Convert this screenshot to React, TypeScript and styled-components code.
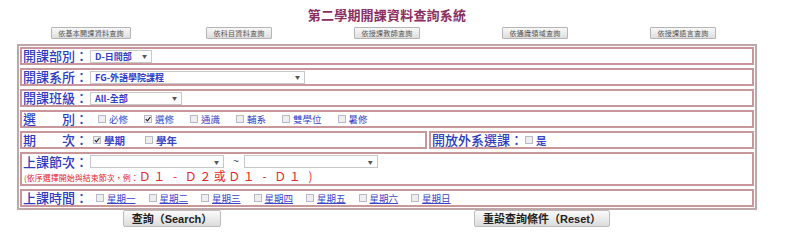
import styled, { createGlobalStyle } from "styled-components";

const GlobalStyle = createGlobalStyle`
  html, body {
    margin: 0;
    padding: 0;
    background: #ffffff;
  }
  body {
    font-family: "Noto Sans CJK TC", "Liberation Sans", sans-serif;
  }
`;

const Page = styled.div`
  width: 740px;
  padding: 6px 0 0 17px;
  box-sizing: content-box;
`;

const Title = styled.h1`
  margin: 0;
  text-align: center;
  font-size: 13px;
  line-height: 17px;
  font-weight: 700;
  color: #8b2f63;
  letter-spacing: 0.2px;
`;

const TopNav = styled.div`
  display: grid;
  grid-template-columns: repeat(5, 1fr);
  justify-items: center;
  margin-top: 4px;
  height: 12px;
`;

const NavButton = styled.button`
  height: 12px;
  padding: 0 6px;
  font-family: "Noto Sans CJK TC", sans-serif;
  font-size: 7px;
  line-height: 10px;
  color: #555555;
  background: linear-gradient(#f8f8f8, #dedede);
  border: 1px solid #b5b5b5;
  border-radius: 1px;
  letter-spacing: 0.3px;
`;

const Frame = styled.div`
  margin-top: 5px;
  border: 2px solid #bda7a8;
  padding: 1px;
  display: flex;
  flex-direction: column;
  gap: 3px;
`;

const Row = styled.div<{ $tall?: boolean }>`
  border: 2px solid #c9979b;
  height: ${(p) => (p.$tall ? 30 : 14)}px;
  display: flex;
  flex-direction: ${(p) => (p.$tall ? "column" : "row")};
  align-items: ${(p) => (p.$tall ? "flex-start" : "center")};
  justify-content: ${(p) => (p.$tall ? "center" : "flex-start")};
`;

const SplitRow = styled.div`
  display: grid;
  grid-template-columns: 407px 1fr;
  gap: 2px;
`;

const Cell = styled.div`
  border: 2px solid #c9979b;
  height: 14px;
  display: flex;
  align-items: center;
`;

const Line = styled.div`
  display: flex;
  align-items: center;
  height: 15px;
`;

const Label = styled.span`
  color: #2f3dc0;
  font-size: 13px;
  font-weight: 500;
  line-height: 14px;
  white-space: pre;
  margin-right: 2px;
  margin-left: 1px;
`;

const SelectBox = styled.div<{ $w: number }>`
  width: ${(p) => p.$w}px;
  height: 13px;
  box-sizing: border-box;
  border: 1px solid #c8c8c8;
  background: #ffffff;
  display: flex;
  align-items: center;
  justify-content: space-between;
  padding: 0 4px;
  font-size: 9px;
  font-weight: 700;
  color: #3240c4;
`;

const Arrow = styled.span`
  font-size: 5px;
  line-height: 6px;
  color: #555555;
`;

const Tilde = styled.span`
  font-family: "Liberation Sans", sans-serif;
  color: #444;
  font-size: 10px;
  line-height: 10px;
  padding: 0 5px 0 9px;
`;

const CheckItem = styled.label<{ $gap: number }>`
  display: inline-flex;
  align-items: center;
  margin-right: ${(p) => p.$gap}px;
`;

const Box = styled.span`
  width: 6px;
  height: 6px;
  border: 1px solid #b8b8c8;
  background: #eeeeee;
  margin-right: 3px;
  display: inline-flex;
  align-items: center;
  justify-content: center;
`;

const CheckText = styled.span<{ $bold?: boolean; $under?: boolean }>`
  font-size: ${(p) => (p.$bold ? 10.5 : 9.5)}px;
  font-weight: ${(p) => (p.$bold ? 700 : 400)};
  color: #3a46c8;
  text-decoration: ${(p) => (p.$under ? "underline" : "none")};
`;

const Hint = styled.div`
  color: #e2262c;
  font-size: 8px;
  line-height: 13px;
  margin-left: 2px;
  display: flex;
  align-items: baseline;
`;

const HintBig = styled.span`
  font-size: 12px;
  line-height: 13px;
  letter-spacing: 2.5px;
`;

const Actions = styled.div`
  display: grid;
  grid-template-columns: 310px 430px;
  justify-items: center;
`;

const ActionButton = styled.button`
  height: 17px;
  padding: 0 8px;
  font-family: "Liberation Sans", "Noto Sans CJK TC", sans-serif;
  font-size: 11px;
  font-weight: 700;
  line-height: 14px;
  color: #222222;
  background: linear-gradient(#fafafa, #dcdcdc);
  border: 1px solid #bdbdbd;
  border-radius: 2px;
`;

const Spacer = styled.span<{ $w: number }>`
  width: ${(p) => p.$w}px;
  flex: none;
`;

const Check = ({ checked }: { checked?: boolean }) => (
  <Box>
    {checked && (
      <svg width="6" height="6" viewBox="0 0 6 6">
        <path d="M0.8 3.2 L2.4 4.8 L5.4 1" stroke="#222" strokeWidth="1.2" fill="none" />
      </svg>
    )}
  </Box>
);

const navItems = ["依基本開課資料查詢", "依科目資料查詢", "依授課教師查詢", "依通識領域查詢", "依授課語言查詢"];

const categories = [
  { text: "必修", checked: false },
  { text: "選修", checked: true },
  { text: "通識", checked: false },
  { text: "輔系", checked: false },
  { text: "雙學位", checked: false },
  { text: "暑修", checked: false },
];

const weekdays = ["星期一", "星期二", "星期三", "星期四", "星期五", "星期六", "星期日"];

const App = () => {
  return (
    <>
      <GlobalStyle />
      <Page>
        <Title>第二學期開課資料查詢系統</Title>
        <TopNav>
          {navItems.map((item) => (
            <NavButton key={item}>{item}</NavButton>
          ))}
        </TopNav>
        <Frame>
          <Row>
            <Label>開課部別：</Label>
            <SelectBox $w={62}>
              <span>D-日間部</span>
              <Arrow>▼</Arrow>
            </SelectBox>
          </Row>
          <Row>
            <Label>開課系所：</Label>
            <SelectBox $w={215}>
              <span>FG-外語學院課程</span>
              <Arrow>▼</Arrow>
            </SelectBox>
          </Row>
          <Row>
            <Label>開課班級：</Label>
            <SelectBox $w={92}>
              <span>All-全部</span>
              <Arrow>▼</Arrow>
            </SelectBox>
          </Row>
          <Row>
            <Label>選　　別：</Label>
            <Spacer $w={8} />
            {categories.map((c) => (
              <CheckItem key={c.text} $gap={16}>
                <Check checked={c.checked} />
                <CheckText>{c.text}</CheckText>
              </CheckItem>
            ))}
          </Row>
          <SplitRow>
            <Cell>
              <Label>期　　次：</Label>
              <Spacer $w={3} />
              <CheckItem $gap={20}>
                <Check checked />
                <CheckText $bold>學期</CheckText>
              </CheckItem>
              <CheckItem $gap={0}>
                <Check />
                <CheckText $bold>學年</CheckText>
              </CheckItem>
            </Cell>
            <Cell>
              <Label>開放外系選課：</Label>
              <CheckItem $gap={0}>
                <Check />
                <CheckText $bold>是</CheckText>
              </CheckItem>
            </Cell>
          </SplitRow>
          <Row $tall>
            <Line>
              <Label>上課節次：</Label>
              <SelectBox $w={134}>
                <span />
                <Arrow>▼</Arrow>
              </SelectBox>
              <Tilde>~</Tilde>
              <SelectBox $w={134}>
                <span />
                <Arrow>▼</Arrow>
              </SelectBox>
            </Line>
            <Hint>
              <span>(依序選擇開始與結束節次，例：</span>
              <HintBig>Ｄ１ - Ｄ２或Ｄ１ - Ｄ１ )</HintBig>
            </Hint>
          </Row>
          <Row>
            <Label>上課時間：</Label>
            <Spacer $w={6} />
            {weekdays.map((d) => (
              <CheckItem key={d} $gap={13}>
                <Check />
                <CheckText $under>{d}</CheckText>
              </CheckItem>
            ))}
          </Row>
        </Frame>
        <Actions>
          <ActionButton>查詢（Search）</ActionButton>
          <ActionButton>重設查詢條件（Reset）</ActionButton>
        </Actions>
      </Page>
    </>
  );
};

export default App;
